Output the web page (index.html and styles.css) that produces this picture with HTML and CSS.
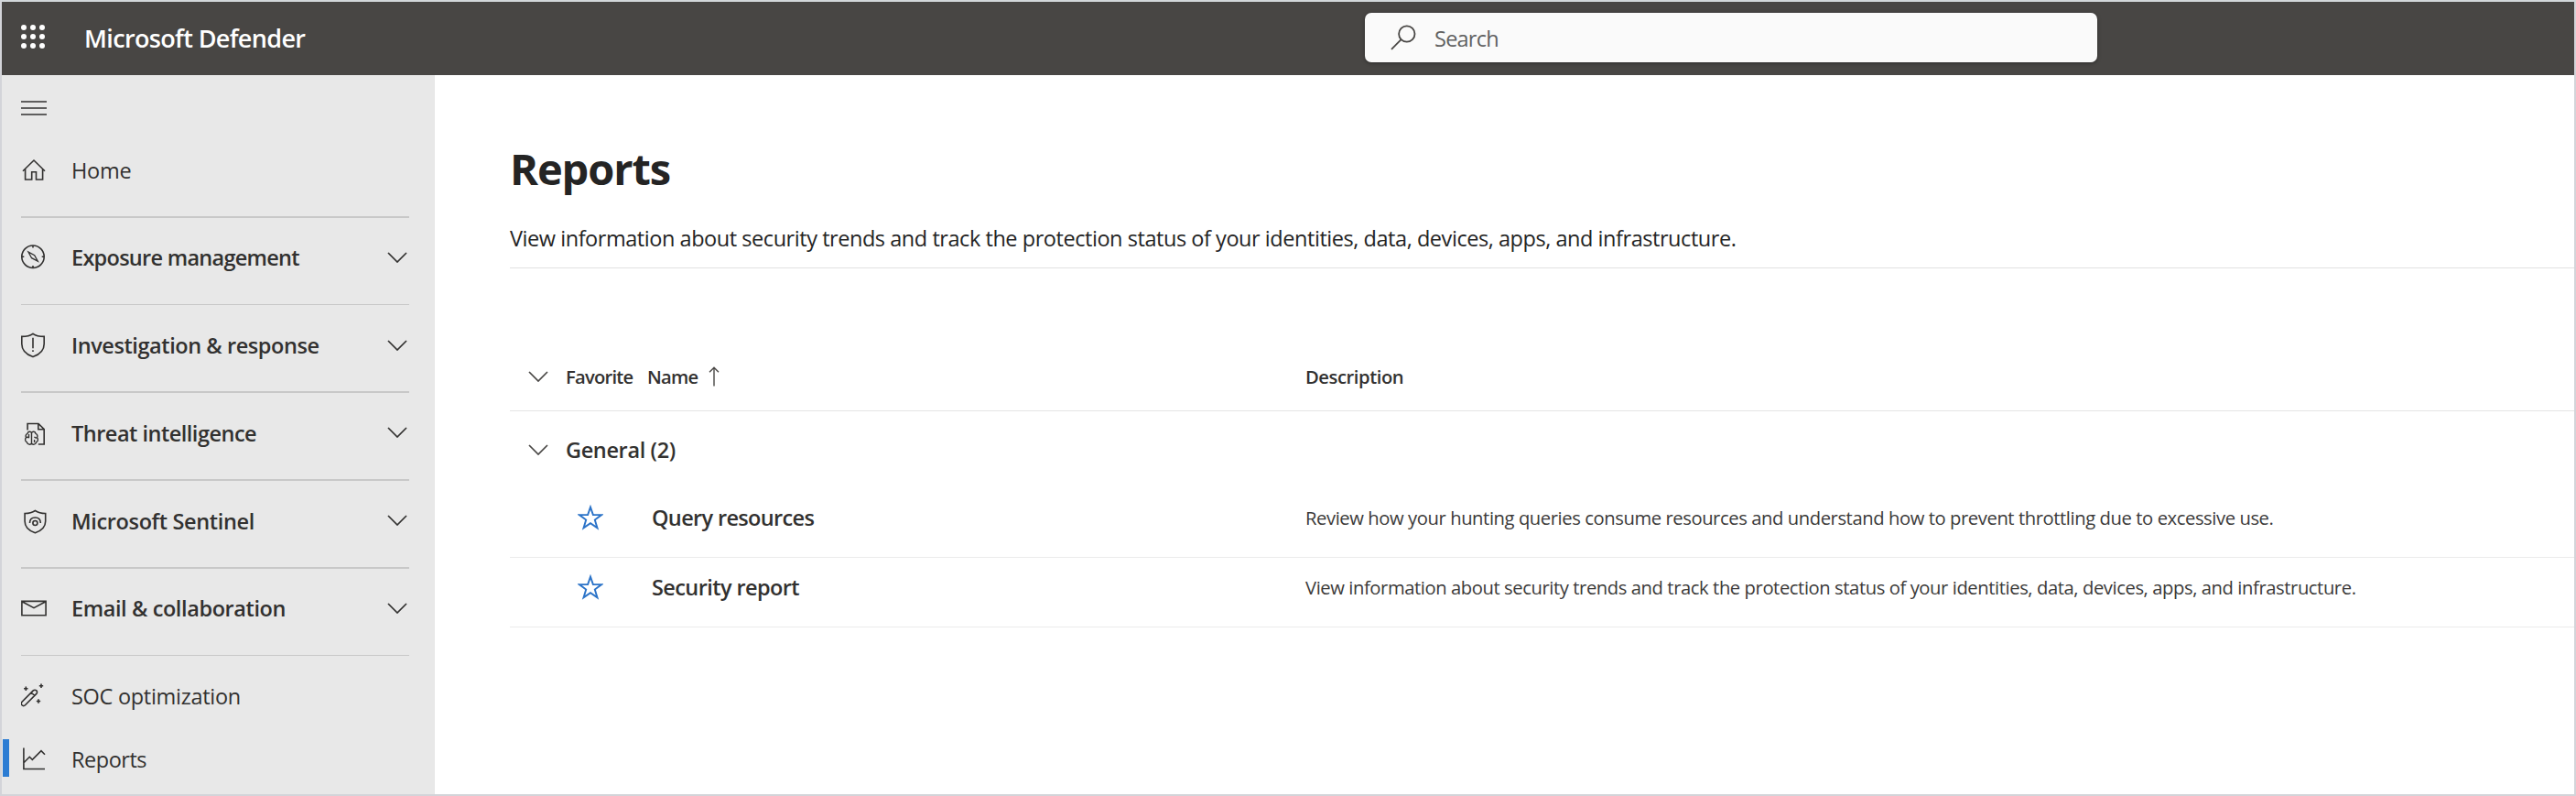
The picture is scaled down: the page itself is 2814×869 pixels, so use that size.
FILE: index.html
```html
<!DOCTYPE html>
<html lang="en">
<head>
<meta charset="utf-8">
<title>Reports - Microsoft Defender</title>
<link rel="stylesheet" href="styles.css">
</head>
<body>
<svg class="defs" width="0" height="0" aria-hidden="true">
  <symbol id="chevron" viewBox="0 0 22 12"><path d="M1 1l10 10L21 1"/></symbol>
  <symbol id="star" viewBox="0 0 28 28"><path d="M14 2.600l2.900 8.400 9.200.1-7.300 5.400 2.700 8.900-7.500-5.200-7.500 5.200 2.700-8.900-7.300-5.400 9.200-.1z"/></symbol>
</svg>
<div class="app">
  <header class="topbar">
    <svg class="waffle" viewBox="0 0 26 26">
      <circle cx="3" cy="3" r="3"/><circle cx="13" cy="3" r="3"/><circle cx="23" cy="3" r="3"/>
      <circle cx="3" cy="13" r="3"/><circle cx="13" cy="13" r="3"/><circle cx="23" cy="13" r="3"/>
      <circle cx="3" cy="23" r="3"/><circle cx="13" cy="23" r="3"/><circle cx="23" cy="23" r="3"/>
    </svg>
    <div class="brand">Microsoft Defender</div>
    <div class="search">
      <svg class="search-icon" viewBox="0 0 28 28"><circle cx="17.800" cy="10" r="8.700"/><path d="M11.600 16.200L1 26.800"/></svg>
      <span class="search-label">Search</span>
    </div>
  </header>
  <div class="body">
    <nav class="sidebar">
      <div class="burger"><svg class="icon" viewBox="0 0 30 30"><path d="M0 8h28M0 15h28M0 22h28" stroke-width="1.700"/></svg></div>
      <a class="item home">
        <svg class="icon" viewBox="0 0 30 30"><path d="M2 15.800L14 4l12 11.800M4.600 13.400V25h7.100v-8.200h4.800V25h7.100V13.400"/></svg>
        <span class="label ls-home">Home</span>
      </a>
      <div class="group">
        <a class="item strong">
          <svg class="icon" viewBox="0 0 30 30"><circle cx="13" cy="14.200" r="12.200"/><path d="M13 2v2.500M13 23.900v2.500M.8 14.200h2.500M22.700 14.200h2.500"/><path d="M8 9.200l6.700 3.500 3.600 6.500-6.700-3.500z" stroke-width="1.300"/></svg>
          <span class="label ls-exposure">Exposure management</span>
          <svg class="chevron"><use href="#chevron"/></svg>
        </a>
      </div>
      <div class="group thin">
        <a class="item strong">
          <svg class="icon" viewBox="0 0 30 30"><path d="M13 2.300C9.800 4.600 5.500 5.400.8 5.400V13.500C.8 20.500 5.500 25 13 27.600c7.500-2.600 12.200-7.100 12.200-14.100V5.400C20.500 5.400 16.200 4.600 13 2.300zM13 6.800v11.400M13 20.300v1.700"/></svg>
          <span class="label ls-investigation">Investigation &amp; response</span>
          <svg class="chevron"><use href="#chevron"/></svg>
        </a>
      </div>
      <div class="group">
        <a class="item strong lower">
          <svg class="icon" viewBox="0 0 30 30"><path d="M7.100 12.500V5.500H19l6.200 6.200V28h-6.400M18.800 5.500v6.300h6.400"/><path d="M11.500 15.500c-1-2-4-1.500-4.500.8-2 .8-2.300 3-1.500 4.400-1.600 1.500-1 4.300.8 5 .6 2.700 4.200 3.300 5.200 1.200 1 2.100 4.600 1.500 5.200-1.200 1.800-.7 2.400-3.500.8-5 .8-1.400.5-3.600-1.500-4.400-.5-2.300-3.500-2.800-4.500-.8zM11.500 15.500v11.400M5.500 20.700c1-.8 2.300-.5 3 .5M8.500 17v4.200M14.600 26v-3M17.500 20.700c-1.200.8-2.400.2-2.900-.9" stroke-width="1.400"/></svg>
          <span class="label ls-threat">Threat intelligence</span>
          <svg class="chevron"><use href="#chevron"/></svg>
        </a>
      </div>
      <div class="group">
        <a class="item strong lower">
          <svg class="icon" viewBox="0 0 30 30"><path d="M15.400 4.500c-3.200 2.200-7 3-11.300 3V16c0 6.500 4.500 10.500 11.300 12.700 6.800-2.200 11.300-6.200 11.300-12.700V7.500c-4.300 0-8.100-.8-11.300-3z"/><path d="M9.500 18c0-3.800 2.400-6 5.900-6s5.900 2.200 5.900 6"/><circle cx="15.400" cy="18" r="2.500"/></svg>
          <span class="label ls-sentinel">Microsoft Sentinel</span>
          <svg class="chevron"><use href="#chevron"/></svg>
        </a>
      </div>
      <div class="group">
        <a class="item strong">
          <svg class="icon" viewBox="0 0 30 30"><path d="M.9 7.400h26.200v15.400H.9zM1.500 8l12.500 6.700L26.500 8"/></svg>
          <span class="label ls-email">Email &amp; collaboration</span>
          <svg class="chevron"><use href="#chevron"/></svg>
        </a>
      </div>
      <div class="group thin last">
        <a class="item">
          <svg class="icon" viewBox="0 0 30 30"><path d="M1 21.200L13.300 8.900a2.400 2.400 0 0 1 3.500 3.500L4.500 24.700a2.400 2.400 0 0 1-3.500-3.500zM11.200 11l3.500 3.500"/><path d="M5.300 4.600v4.400M3.100 6.800h4.400M22 1.600v4.400M19.800 3.800h4.400M19 18.300v4.400M16.800 20.500h4.400"/></svg>
          <span class="label ls-soc">SOC optimization</span>
        </a>
        <a class="item selected">
          <svg class="icon" viewBox="0 0 30 30"><path d="M2.900 2.500V25.500H26M2.900 18.700l6.400-6.400 3 3L22 5.700l4 4"/></svg>
          <span class="label ls-reports">Reports</span>
        </a>
      </div>
    </nav>
    <main class="main">
      <h1 class="title">Reports</h1>
      <p class="subtitle">View information about security trends and track the protection status of your identities, data, devices, apps, and infrastructure.</p>
      <div class="table">
        <div class="thead">
          <svg class="chevron light"><use href="#chevron"/></svg>
          <span class="ls-th">Favorite</span>
          <span class="name-head"><span class="ls-th">Name</span><svg class="sort" viewBox="0 0 12 22"><path d="M6 21.500V1.500M1 6.300l5-5 5 5"/></svg></span>
          <span class="ls-desc">Description</span>
        </div>
        <div class="group-row">
          <svg class="chevron light"><use href="#chevron"/></svg>
          <span>General (2)</span>
        </div>
        <div class="row">
          <svg class="star"><use href="#star"/></svg>
          <span class="name ls-query">Query resources</span>
          <span class="desc">Review how your hunting queries consume resources and understand how to prevent throttling due to excessive use.</span>
        </div>
        <div class="row">
          <svg class="star"><use href="#star"/></svg>
          <span class="name ls-security">Security report</span>
          <span class="desc">View information about security trends and track the protection status of your identities, data, devices, apps, and infrastructure.</span>
        </div>
      </div>
    </main>
  </div>
</div>
</body>
</html>
```

FILE: styles.css
```css
* { box-sizing: border-box; }

body {
  margin: 0;
  font-family: "Open Sans", "Noto Sans", sans-serif;
  font-size: 23.5px;
  color: #323130;
}

.defs { position: absolute; }

svg { flex: none; fill: none; stroke: #323130; stroke-width: 1.6; }

.app {
  display: flex;
  flex-direction: column;
  width: 2814px;
  height: 869px;
  border: 2px solid #d3d4d9;
  border-top-color: #d2d7da;
  background: #fff;
  overflow: hidden;
  white-space: nowrap;
}

/* Top bar */
.topbar {
  display: flex;
  align-items: flex-start;
  height: 80px;
  flex: none;
  padding-left: 21px;
  background: #484644;
}

.waffle { width: 26px; height: 26px; margin-top: 25px; fill: #fff; stroke: none; }

.brand {
  width: 1397px;
  margin-left: 43px;
  line-height: 79px;
  font-size: 27px;
  font-weight: 600;
  letter-spacing: -0.64px;
  color: #fff;
}

.search {
  display: flex;
  align-items: center;
  width: 800px;
  height: 54px;
  margin: 12px 0 0 2px;
  padding-left: 28px;
  border-radius: 7px;
  background: #fafafa;
  box-shadow: 0 1px 4px rgba(0, 0, 0, .35);
}

.search-icon { width: 28px; height: 28px; stroke: #484644; stroke-width: 1.8; }

.search-label { margin-left: 20px; padding-top: 1px; letter-spacing: -0.76px; color: #616161; }

.body { display: flex; flex: 1; min-height: 0; }

/* Navigation */
.sidebar { width: 473px; flex: none; padding: 2px 28px 0 21px; background: #e8e8e8; }

.burger { display: flex; align-items: center; height: 68px; }

.item { display: flex; align-items: center; height: 85px; }

.item.home { height: 67px; margin-bottom: 17px; }

.strong { font-weight: 600; }

.lower .label { padding-top: 2px; }

.icon { width: 30px; height: 30px; }

.label { flex: 1; margin-left: 25px; }

.chevron { width: 22px; height: 12px; margin-right: 2px; stroke: #323130; stroke-width: 1.7; }

.group { height: 96px; border-top: 2px solid #c8c8c8; }

.group.thin { height: 95px; border-top-width: 1px; padding-top: 1px; }

.group.last { height: 152px; padding-top: 9px; }

.last .item { height: 69px; }

.selected { margin-left: -20px; padding-left: 13px; background: linear-gradient(#2b7cd3, #2b7cd3) no-repeat 0 13px / 7px 41px; }

.selected .icon { margin-left: 7px; }

.ls-home { letter-spacing: -0.27px; }
.ls-exposure { letter-spacing: -0.72px; }
.ls-investigation { letter-spacing: -0.43px; }
.ls-threat { letter-spacing: -0.5px; }
.ls-sentinel { letter-spacing: -0.36px; }
.ls-email { letter-spacing: -0.4px; }
.ls-soc { letter-spacing: -0.29px; }
.ls-reports { letter-spacing: -0.48px; }

/* Content */
.main { flex: 1; min-width: 0; padding: 72px 0 0 82px; }

.title {
  margin: 0;
  line-height: 60px;
  font-size: 47px;
  font-weight: 700;
  letter-spacing: -1.1px;
  color: #242424;
}

.subtitle {
  height: 79px;
  margin: 0;
  padding-top: 13px;
  border-bottom: 1px solid #e1e1e1;
  line-height: 66px;
  letter-spacing: -0.45px;
  color: #242424;
}

.table { padding-top: 81px; }

.thead {
  display: grid;
  grid-template-columns: 61px 89px 719px 1fr;
  align-items: center;
  height: 75px;
  border-bottom: 1px solid #e5e5e5;
  font-size: 20.2px;
  font-weight: 600;
}

.light { margin-left: 20px; stroke: #484644; }

.name-head { display: flex; align-items: center; gap: 12px; }

.sort { width: 12px; height: 22px; stroke: #484644; stroke-width: 1.4; }

.ls-th { letter-spacing: -0.78px; }
.ls-desc { letter-spacing: -0.43px; }

.group-row {
  display: grid;
  grid-template-columns: 61px 1fr;
  align-items: center;
  height: 83px;
  font-weight: 600;
  letter-spacing: -0.36px;
}

.row {
  display: grid;
  grid-template-columns: 155px 714px 1fr;
  align-items: center;
  height: 77px;
  padding-bottom: 11px;
  border-bottom: 1px solid #ebebeb;
}

.row:last-child { height: 76px; }

.star { width: 28px; height: 28px; margin-left: 74px; stroke: #2b73c8; stroke-width: 1.9; }

.name { font-weight: 600; }

.ls-query { letter-spacing: -0.65px; }
.ls-security { letter-spacing: -0.59px; }

.desc { font-size: 20.2px; letter-spacing: -0.41px; color: #3b3a39; }
```
